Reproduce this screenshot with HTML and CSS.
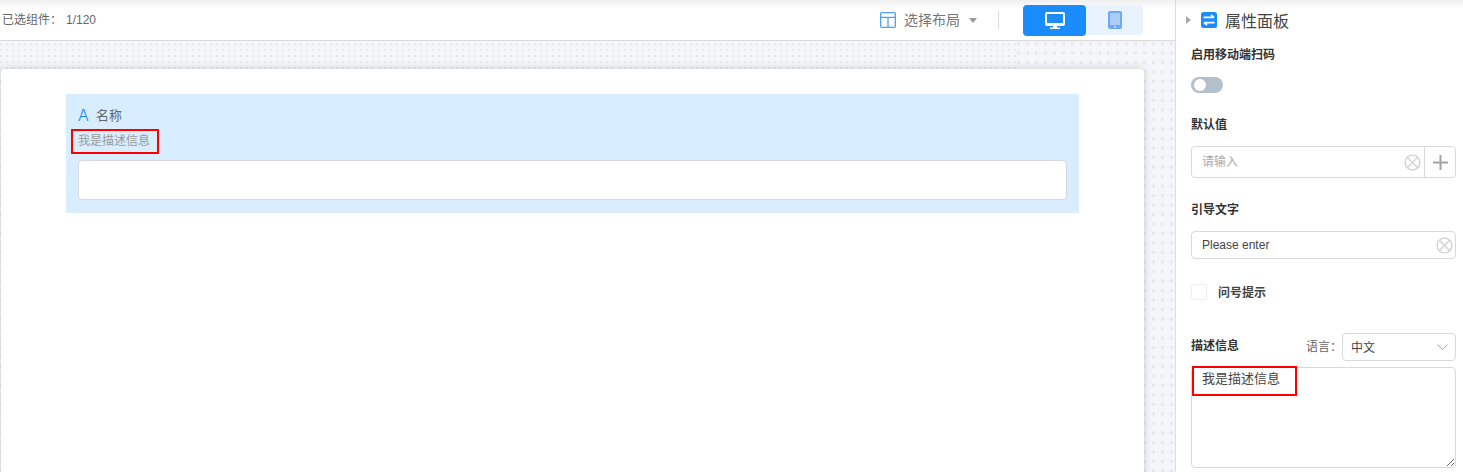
FILE: index.html
```html
<!DOCTYPE html>
<html lang="zh">
<head>
<meta charset="utf-8">
<title>属性面板</title>
<link rel="stylesheet" href="styles.css">
</head>
<body>
<div class="app">
  <main class="main">
    <header class="toolbar">
      <div class="count">已选组件：<span class="count-num">1/120</span></div>
      <div class="tools">
        <svg class="layout-icon" width="16" height="16" viewBox="0 0 16 16" fill="none" stroke="#4f9ff5" stroke-width="1.3"><rect x=".65" y=".65" width="14.7" height="14.7" rx="1"/><path d="M.65 5.3h14.7M8 5.3v10"/></svg>
        <span class="layout-text">选择布局</span>
        <span class="caret-down"></span>
        <span class="divider"></span>
        <div class="switch">
          <button class="sw sw-pc"><svg width="20" height="17" viewBox="0 0 20 17"><path fill="#fff" d="M2 0h16a2 2 0 0 1 2 2v10a2 2 0 0 1-2 2h-6v1.4h3V17H5v-1.6h3V14H2a2 2 0 0 1-2-2V2a2 2 0 0 1 2-2z"/><rect x="2" y="2" width="16" height="9" fill="#1a8cfe"/></svg></button>
          <button class="sw sw-mobile"><svg width="14" height="18" viewBox="0 0 14 18"><rect width="14" height="18" rx="2" fill="#6fa8fa"/><rect x="2" y="2" width="10" height="12" fill="#a9cdfc"/><circle cx="7" cy="16" r=".9" fill="#e8f3ff"/></svg></button>
        </div>
      </div>
    </header>
    <section class="canvas">
      <div class="fine-dots"></div>
      <div class="card">
        <div class="field">
          <div class="field-title"><span class="field-a">A</span><span>名称</span></div>
          <div class="field-desc"><span class="marked">我是描述信息</span></div>
          <div class="field-input"></div>
        </div>
      </div>
    </section>
  </main>
  <aside class="panel">
    <div class="panel-head">
      <span class="caret-right"></span>
      <svg class="panel-icon" width="16" height="16" viewBox="0 0 16 16"><rect width="16" height="16" rx="2.5" fill="#1a8cfe"/><path d="M2.5 5.4h10.5M10 3l3 2.4M13.5 10.6H3M6 13l-3-2.4" fill="none" stroke="#fff" stroke-width="1.7"/></svg>
      <span class="panel-title">属性面板</span>
    </div>
    <div class="label label-first">启用移动端扫码</div>
    <div class="toggle"><span class="toggle-knob"></span></div>
    <div class="label label-next">默认值</div>
    <div class="input input-default">
      <span class="placeholder">请输入</span>
      <svg class="clear" width="17" height="17" viewBox="0 0 17 17" fill="none" stroke="#d2d2d2" stroke-width="1.4"><circle cx="8.5" cy="8.5" r="7.4"/><path d="M3.5 3.5l10 10M13.5 3.5l-10 10"/></svg>
      <span class="add"><svg width="17" height="17" viewBox="0 0 17 17" stroke="#a3a3a3" stroke-width="2"><path d="M8.5 1v15M1 8.5h15"/></svg></span>
    </div>
    <div class="label label-next">引导文字</div>
    <div class="input input-guide">
      <span class="value">Please enter</span>
      <svg class="clear" width="17" height="17" viewBox="0 0 17 17" fill="none" stroke="#d2d2d2" stroke-width="1.4"><circle cx="8.5" cy="8.5" r="7.4"/><path d="M3.5 3.5l10 10M13.5 3.5l-10 10"/></svg>
    </div>
    <div class="check-row"><span class="checkbox"></span><span class="check-label">问号提示</span></div>
    <div class="desc-row">
      <span class="desc-label">描述信息</span>
      <span class="lang-label">语言：</span>
      <div class="select"><span class="select-text">中文</span><svg width="11" height="6" viewBox="0 0 11 6" fill="none" stroke="#aaa"><path d="M.5.5l5 5 5-5"/></svg></div>
    </div>
    <div class="text-wrap">
      <textarea class="textarea">我是描述信息</textarea>
      <span class="text-mark"></span>
    </div>
  </aside>
</div>
</body>
</html>
```
FILE: styles.css
```css
* { box-sizing: border-box; }
html, body { margin: 0; height: 472px; overflow: hidden; }
body {
  font-family: "Liberation Sans", "Noto Sans CJK SC", sans-serif;
  font-size: 12px;
  color: #666;
  background: #fff;
}
.app { display: flex; height: 472px; }
.main {
  width: 1176px;
  border-right: 1px solid #ddd;
  display: flex;
  flex-direction: column;
}

/* toolbar */
.toolbar {
  height: 41px;
  flex: none;
  border-bottom: 1px solid #d9d9d9;
  background: linear-gradient(#efefef, #fff 9px);
  display: flex;
  align-items: center;
  justify-content: space-between;
  padding: 0 32px 0 2px;
}
.count { line-height: 18px; padding-bottom: 1px; color: #666; }
.count-num { margin-left: 4px; }
.tools { display: flex; align-items: center; }
.layout-text { margin-left: 8px; padding-bottom: 3px; font-size: 14px; color: #777; }
.caret-down {
  margin: 0 0 0 9px;
  border-top: 5px solid #999;
  border-left: 4.5px solid transparent;
  border-right: 4.5px solid transparent;
}
.divider { width: 1px; height: 18px; background: #ddd; margin: 0 24px 0 21px; }
.switch { display: flex; align-items: flex-start; }
.sw {
  border: 0;
  padding: 0;
  display: flex;
  align-items: center;
  justify-content: center;
}
.sw-pc { width: 63px; height: 31px; background: #1a8cfe; border-radius: 4px; }
.sw-mobile { width: 57px; height: 30px; background: #e8f3ff; border-radius: 0 4px 4px 0; }

/* canvas */
.canvas {
  flex: 1;
  position: relative;
  overflow: hidden;
  padding: 28px 31px 0 1px;
  background-color: #f5f6fa;
  background-image: radial-gradient(circle at 1.5px 1.5px, #e8e9ed 1.7px, transparent 1.9px);
  background-size: 9px 9.5px;
  background-position: 0 1px;
}
.fine-dots {
  position: absolute;
  left: 0;
  top: 0;
  width: 1016px;
  height: 28px;
  background-color: #f5f6fa;
  background-image: radial-gradient(circle at 1px 1px, #e6e7eb 1px, transparent 1.1px);
  background-size: 6px 6px;
  background-position: 0 2px;
}
.card {
  position: relative;
  height: 100%;
  min-height: 420px;
  background: #fff;
  border-radius: 4px;
  box-shadow: 0 0 8px rgba(0, 0, 0, .18);
  padding: 25px 65px 0;
}
.field {
  background: #d8edff;
  padding: 12px 12px 13px;
}
.field-title {
  display: flex;
  align-items: center;
  height: 18px;
  font-size: 13px;
  color: #666;
}
.field-title span:last-child { padding-bottom: 2px; }
.field-a {
  width: 18px;
  font-family: "Inter", sans-serif;
  font-weight: 300;
  font-size: 16px;
  color: #1f86ee;
}
.field-desc {
  margin-top: 8px;
  height: 18px;
  line-height: 18px;
  color: #999;
}
.marked { position: relative; display: inline-block; }
.marked::after {
  content: "";
  position: absolute;
  left: -7px;
  right: -9px;
  top: -3px;
  bottom: -4px;
  border: 2px solid #f00;
}
.field-input {
  margin-top: 10px;
  height: 40px;
  background: #fff;
  border: 1px solid #d5d9de;
  border-radius: 4px;
}

/* panel */
.panel {
  flex: 1;
  padding: 10px 7px 0 15px;
  background: linear-gradient(#efefef, #fff 9px);
  color: #333;
}
.panel-head { display: flex; align-items: center; height: 20px; }
.caret-right {
  margin-left: -5px;
  border-left: 5px solid #aaa;
  border-top: 4.5px solid transparent;
  border-bottom: 4.5px solid transparent;
}
.panel-icon { margin-left: 10px; }
.panel-title { margin-left: 8px; font-size: 16px; color: #444; }
.label { height: 18px; line-height: 18px; font-weight: 700; color: #333; }
.label-first { margin-top: 16px; }
.label-next { margin-top: 23px; }
.toggle {
  margin-top: 13px;
  width: 32px;
  height: 16px;
  border-radius: 8px;
  background: #b4bfcc;
  padding: 2px 0 0 3px;
}
.toggle-knob {
  display: block;
  width: 12px;
  height: 12px;
  border-radius: 50%;
  background: #fff;
}
.input {
  margin-top: 12px;
  display: flex;
  align-items: center;
  border: 1px solid #d9d9d9;
  border-radius: 4px;
  padding-left: 10px;
}
.input-default { height: 32px; }
.input-guide { height: 28px; padding-right: 2px; justify-content: space-between; }
.placeholder { flex: 1; padding-bottom: 3px; color: #aaa; }
.value { color: #444; }
.add {
  width: 31px;
  height: 100%;
  margin-left: 3px;
  border-left: 1px solid #d9d9d9;
  display: flex;
  align-items: center;
  justify-content: center;
}
.check-row { margin-top: 25px; display: flex; align-items: center; height: 16px; }
.checkbox { width: 16px; height: 16px; border: 1px solid #eee; border-radius: 3px; }
.check-label { margin-left: 11px; padding-bottom: 2px; font-weight: 700; color: #444; }
.desc-row { margin-top: 33px; display: flex; align-items: center; height: 28px; }
.desc-label { font-weight: 700; color: #333; margin-top: -6px; }
.lang-label { margin-left: auto; padding-bottom: 3px; color: #666; }
.select {
  width: 114px;
  height: 28px;
  border: 1px solid #d9d9d9;
  border-radius: 4px;
  padding: 0 7px 0 8px;
  display: flex;
  align-items: center;
  justify-content: space-between;
  color: #444;
}
.select-text { padding-bottom: 2px; }
.text-wrap { position: relative; margin-top: 6px; height: 101px; }
.textarea {
  display: block;
  width: 100%;
  height: 100%;
  margin: 0;
  padding: 2px 10px;
  border: 1px solid #d9d9d9;
  border-radius: 4px;
  outline: 0;
  font: 13px/18px "Liberation Sans", "Noto Sans CJK SC", sans-serif;
  color: #444;
  resize: vertical;
}
.text-mark {
  position: absolute;
  left: 1px;
  top: -1px;
  width: 105px;
  height: 30px;
  border: 2px solid #f00;
  pointer-events: none;
}
```
